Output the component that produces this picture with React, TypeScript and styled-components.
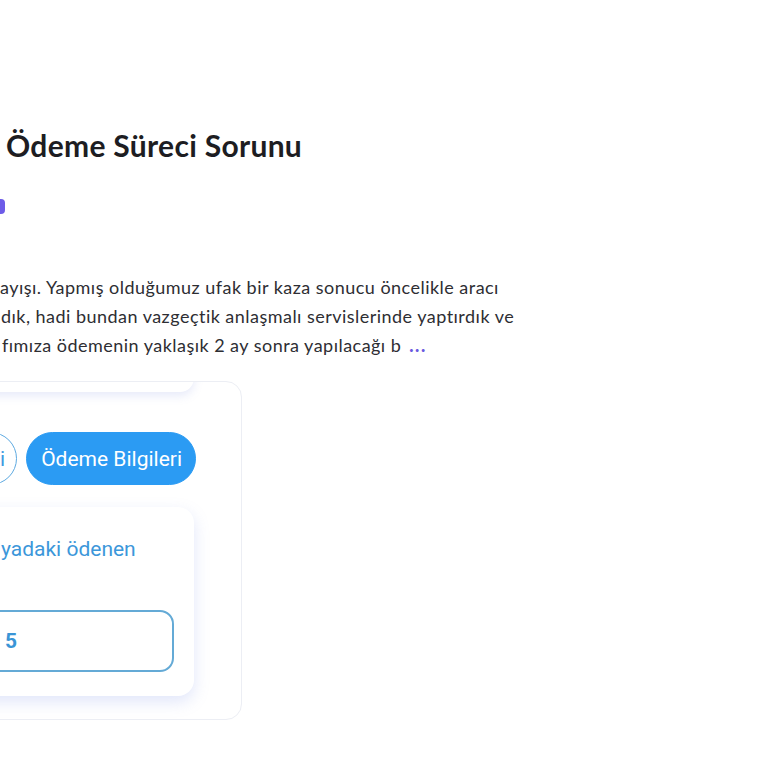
import React from "react";
import styled, { createGlobalStyle } from "styled-components";

const Global = createGlobalStyle`
  html, body { margin: 0; padding: 0; background: #ffffff; }
  body { overflow: hidden; }
`;

const Page = styled.div`
  width: 768px;
  height: 768px;
  overflow: hidden;
  background: #ffffff;
  display: flex;
  flex-direction: column;
  font-family: "Lato", "Noto Sans", sans-serif;
`;

const Title = styled.h1`
  margin: 127px 0 0 6px;
  font-family: "Lato", sans-serif;
  font-weight: 700;
  font-size: 30px;
  letter-spacing: 0.3px;
  line-height: 36px;
  color: #1d1d22;
  white-space: nowrap;
`;

const Badge = styled.div`
  margin: 36px 0 0 -60px;
  width: 65px;
  height: 15px;
  border-radius: 4px;
  background: #6d5ce8;
`;

const Paragraph = styled.div`
  margin-top: 59px;
  font-size: 18px;
  letter-spacing: 0.47px;
  line-height: 29px;
  color: #2e2e33;
`;

const Line = styled.div<{ $indent: number }>`
  white-space: nowrap;
  padding-left: ${(p) => p.$indent}px;
`;

const More = styled.span`
  color: #6a5ae0;
  font-weight: 900;
  letter-spacing: 1.5px;
  margin-left: 8px;
`;

const Frame = styled.div`
  margin: 21px 0 0 -120px;
  width: 362px;
  height: 339px;
  box-sizing: border-box;
  border: 1px solid #eceef4;
  border-radius: 16px;
  overflow: hidden;
  background: #ffffff;
  padding: 0 45px 0 20px;
  display: flex;
  flex-direction: column;
  font-family: "Roboto", sans-serif;
`;

const TopCard = styled.div`
  margin: -30px 2px 0 0;
  height: 40px;
  border-radius: 0 0 14px 14px;
  background: #ffffff;
  box-shadow: 0 4px 10px rgba(120, 140, 220, 0.18);
`;

const ChipRow = styled.div`
  margin-top: 40px;
  display: flex;
  justify-content: flex-end;
  gap: 9px;
`;

const Chip = styled.div<{ $active?: boolean }>`
  height: 53px;
  box-sizing: border-box;
  border-radius: 27px;
  padding: 0 ${(p) => (p.$active ? 13 : 11)}px 0 14px;
  display: flex;
  align-items: center;
  font-size: 21px;
  white-space: nowrap;
  border: 1.5px solid ${(p) => (p.$active ? "#2b9bf3" : "#5da9e0")};
  background: ${(p) => (p.$active ? "#2b9bf3" : "#ffffff")};
  color: ${(p) => (p.$active ? "#ffffff" : "#3e9ae0")};
`;

const Card = styled.div`
  margin: 22px 2px 0 0;
  height: 189px;
  border-radius: 16px;
  background: #ffffff;
  box-shadow: 0 6px 16px rgba(120, 140, 230, 0.22);
  box-sizing: border-box;
  padding: 30px 20px 0 100px;
  display: flex;
  flex-direction: column;
`;

const CardText = styled.div`
  font-size: 21px;
  color: #3c97da;
  white-space: nowrap;
`;

const Input = styled.div`
  margin: 49px 0 0 -78px;
  height: 62px;
  box-sizing: border-box;
  border: 2px solid #64aad6;
  border-radius: 14px;
  padding-left: 80px;
  display: flex;
  align-items: center;
  font-size: 21px;
  font-weight: 700;
  color: #3a95d6;
`;

export default function App() {
  return (
    <>
      <Global />
      <Page>
        <Title>Ödeme Süreci Sorunu</Title>
        <Badge />
        <Paragraph>
          <Line $indent={0}>ayışı. Yapmış olduğumuz ufak bir kaza sonucu öncelikle aracı</Line>
          <Line $indent={1}>dık, hadi bundan vazgeçtik anlaşmalı servislerinde yaptırdık ve</Line>
          <Line $indent={2}>
            fımıza ödemenin yaklaşık 2 ay sonra yapılacağı b<More>...</More>
          </Line>
        </Paragraph>
        <Frame>
          <TopCard />
          <ChipRow>
            <Chip>Kaza Bilgi</Chip>
            <Chip $active>Ödeme Bilgileri</Chip>
          </ChipRow>
          <Card>
            <CardText>yadaki ödenen</CardText>
            <Input>5</Input>
          </Card>
        </Frame>
      </Page>
    </>
  );
}
